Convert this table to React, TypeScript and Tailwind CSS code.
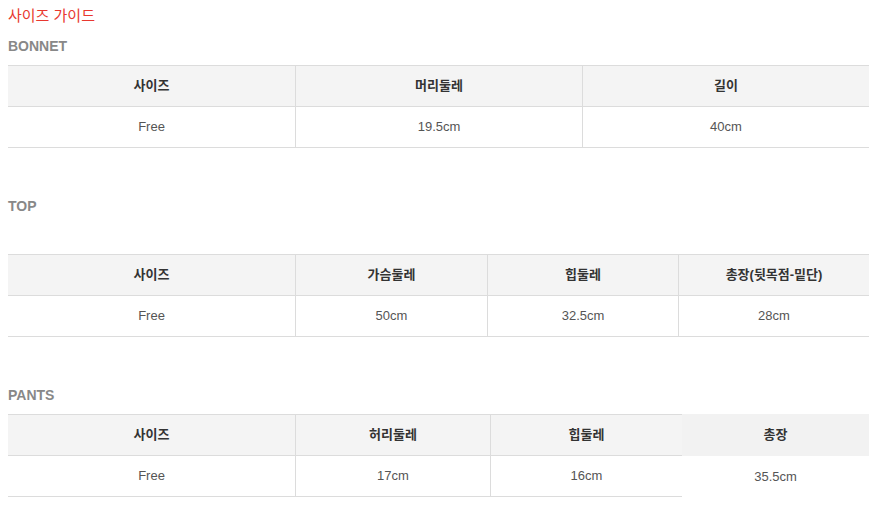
import React from 'react';

type Col = { w: string; head: string; value: string; bare?: boolean };

const BONNET: Col[] = [
  { w: 'w-[287px]', head: '사이즈', value: 'Free' },
  { w: 'w-[287px]', head: '머리둘레', value: '19.5cm' },
  { w: 'w-[287px]', head: '길이', value: '40cm' },
];

const TOP: Col[] = [
  { w: 'w-[287px]', head: '사이즈', value: 'Free' },
  { w: 'w-[192px]', head: '가슴둘레', value: '50cm' },
  { w: 'w-[191px]', head: '힙둘레', value: '32.5cm' },
  { w: 'w-[191px]', head: '총장(뒷목점-밑단)', value: '28cm' },
];

const PANTS: Col[] = [
  { w: 'w-[287px]', head: '사이즈', value: 'Free' },
  { w: 'w-[195px]', head: '허리둘레', value: '17cm' },
  { w: 'w-[192px]', head: '힙둘레', value: '16cm' },
  { w: 'w-[187px]', head: '총장', value: '35.5cm', bare: true },
];

const SizeTable: React.FC<{ cols: Col[] }> = ({ cols }) => (
  <div className="flex">
    {cols.map((c, i) =>
      c.bare ? (
        <div key={i} className={`${c.w} flex flex-col`}>
          <div className="h-[42px] bg-[#f2f2f2] flex items-center justify-center text-[13px] font-semibold text-[#333]">
            {c.head}
          </div>
          <div className="h-[41px] flex items-center justify-center text-[13px] text-[#555]">
            {c.value}
          </div>
        </div>
      ) : (
        <div key={i} className={`${c.w} flex flex-col border-t border-[#dcdcdc] ${i > 0 ? 'border-l' : ''}`}>
          <div className="h-[41px] bg-[#f4f4f4] border-b border-[#dcdcdc] flex items-center justify-center text-[13px] font-semibold text-[#333]">
            {c.head}
          </div>
          <div className="h-[41px] border-b border-[#dcdcdc] flex items-center justify-center text-[13px] text-[#555]">
            {c.value}
          </div>
        </div>
      )
    )}
  </div>
);

export default function App() {
  return (
    <div
      className="w-[878px] h-[508px] bg-white px-2 overflow-hidden"
      style={{ fontFamily: '"Liberation Sans", "Noto Sans CJK KR", sans-serif' }}
    >
      <h1 className="pt-[6px] text-[15px] leading-[20px] text-[#e8382f]">사이즈 가이드</h1>

      <section className="mt-[12px]">
        <p className="text-[14px] leading-[16px] font-bold text-[#888]">BONNET</p>
        <div className="mt-[11px]">
          <SizeTable cols={BONNET} />
        </div>
      </section>

      <section className="mt-[50px]">
        <p className="text-[14px] leading-[16px] font-bold text-[#888]">TOP</p>
        <div className="mt-[40px]">
          <SizeTable cols={TOP} />
        </div>
      </section>

      <section className="mt-[50px]">
        <p className="text-[14px] leading-[16px] font-bold text-[#888]">PANTS</p>
        <div className="mt-[11px]">
          <SizeTable cols={PANTS} />
        </div>
      </section>
    </div>
  );
}
